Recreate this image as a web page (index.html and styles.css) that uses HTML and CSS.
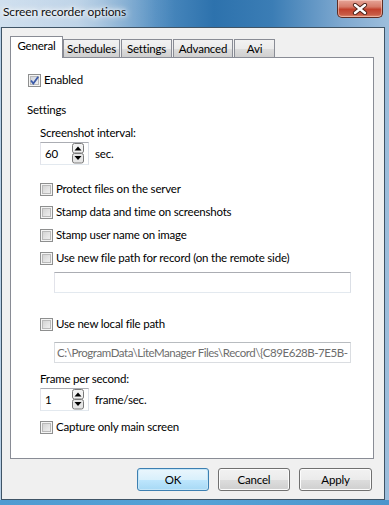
FILE: index.html
```html
<!DOCTYPE html>
<html>
<head>
<meta charset="utf-8">
<link rel="stylesheet" href="styles.css">
</head>
<body>
<div class="window">
  <div class="titlebar">
    <span class="title">Screen recorder options</span>
    <div class="close">
      <svg width="16" height="12" viewBox="0 0 16 12"><path d="M3 2 L13 10 M13 2 L3 10" stroke="#4a2118" stroke-width="4.2" stroke-linecap="round"/><path d="M3 2 L13 10 M13 2 L3 10" stroke="#ffffff" stroke-width="2.4" stroke-linecap="round"/></svg>
    </div>
  </div>
  <div class="client">
    <div class="tabs">
      <div class="tab active w-general">General</div>
      <div class="tab w-sched">Schedules</div>
      <div class="tab w-set">Settings</div>
      <div class="tab w-adv">Advanced</div>
      <div class="tab w-avi">Avi</div>
    </div>
    <div class="panel">
      <label class="row r-enabled">
        <span class="cb checked"><svg width="13" height="13" viewBox="0 0 13 13"><path d="M3 6.5 L5.3 9.5 L10.2 2.8" fill="none" stroke="#3b5aa8" stroke-width="1.8"/></svg></span>
        <span>Enabled</span>
      </label>
      <div class="row r-settings">Settings</div>
      <div class="row indent-l r-interval">Screenshot interval:</div>
      <div class="spinrow r-spin1">
        <div class="spin"><span class="val">60</span><span class="arrows"><svg width="12" height="21" viewBox="0 0 12 21"><rect x="0.5" y="0.5" width="11" height="9.5" rx="2" fill="#f2f2f2" stroke="#7a7a7a"/><rect x="0.5" y="10.5" width="11" height="9.5" rx="2" fill="#e6e6e6" stroke="#7a7a7a"/><path d="M2.5 7.5 L6 3.5 L9.5 7.5 Z" fill="#000"/><path d="M2.5 13 L6 17 L9.5 13 Z" fill="#000"/></svg></span></div>
        <span class="unit">sec.</span>
      </div>
      <label class="row indent r-protect"><span class="cb"></span><span>Protect files on the server</span></label>
      <label class="row indent r-next"><span class="cb"></span><span>Stamp data and time on screenshots</span></label>
      <label class="row indent r-next"><span class="cb"></span><span>Stamp user name on image</span></label>
      <label class="row indent r-next"><span class="cb"></span><span>Use new file path for record (on the remote side)</span></label>
      <div class="field r-field1"></div>
      <label class="row indent r-local"><span class="cb"></span><span>Use new local file path</span></label>
      <div class="field disabled r-field2">C:\ProgramData\LiteManager Files\Record\{C89E628B-7E5B-</div>
      <div class="row indent-l r-fps">Frame per second:</div>
      <div class="spinrow r-spin2">
        <div class="spin"><span class="val">1</span><span class="arrows"><svg width="12" height="21" viewBox="0 0 12 21"><rect x="0.5" y="0.5" width="11" height="9.5" rx="2" fill="#f2f2f2" stroke="#7a7a7a"/><rect x="0.5" y="10.5" width="11" height="9.5" rx="2" fill="#e6e6e6" stroke="#7a7a7a"/><path d="M2.5 7.5 L6 3.5 L9.5 7.5 Z" fill="#000"/><path d="M2.5 13 L6 17 L9.5 13 Z" fill="#000"/></svg></span></div>
        <span class="unit">frame/sec.</span>
      </div>
      <label class="row indent r-capture"><span class="cb"></span><span>Capture only main screen</span></label>
    </div>
    <div class="buttons">
      <button class="btn default">OK</button>
      <button class="btn">Cancel</button>
      <button class="btn apply">Apply</button>
    </div>
  </div>
  <div class="frame-bottom"></div>
</div>
</body>
</html>
```

FILE: styles.css
```css
* { box-sizing: border-box; }
html, body { margin: 0; padding: 0; }
body {
  width: 389px;
  height: 505px;
  overflow: hidden;
  font-family: Lato, "Noto Sans", "Liberation Sans", sans-serif;
  font-size: 11.5px;
  letter-spacing: -0.2px;
  color: #000;
  background: linear-gradient(to right, #b7cfe6 0%, #a7c4df 20%, #4f8cc0 40%, #2d72ad 55%, #3b7db5 70%, #7fa9d0 88%, #9dbedc 100%);
}
.window {
  width: 389px;
  height: 505px;
  display: flex;
  flex-direction: column;
}
.titlebar {
  height: 27px;
  display: flex;
  justify-content: space-between;
  align-items: flex-start;
  padding-left: 3px;
  padding-right: 6px;
  background: linear-gradient(to right, rgba(255,255,255,0.35) 0%, rgba(255,255,255,0.25) 25%, rgba(255,255,255,0) 45%);
}
.title {
  margin-top: 4px;
  line-height: 16px;
  font-size: 12px;
  letter-spacing: -0.1px;
  color: #111;
  text-shadow: 0 0 8px #fff, 0 0 6px #fff, 0 0 3px #fff;
}
.close {
  width: 46px;
  height: 18px;
  border: 1px solid #5d2d24;
  border-top: none;
  border-radius: 0 0 5px 5px;
  background: linear-gradient(to bottom, #e6a598 0%, #d67b69 40%, #c2412c 55%, #c85b45 85%, #e08f72 100%);
  display: flex;
  align-items: center;
  justify-content: center;
  box-shadow: inset 0 0 0 1px rgba(255,220,210,0.5);
}
.client {
  margin-left: 1px;
  width: 384px;
  height: 473px;
  border: 1px solid #3f5466;
  background: #f0f0f0;
  padding: 8px 0 0 8px;
  display: flex;
  flex-direction: column;
}
.frame-bottom {
  flex: 1;
  background: linear-gradient(to right, #4f9bd1, #55a2d6 50%, #4b95cc);
}
.tabs {
  display: flex;
  align-items: flex-end;
  height: 21px;
  position: relative;
  z-index: 2;
}
.tab {
  height: 18px;
  border: 1px solid #898c95;
  border-bottom: none;
  background: linear-gradient(to bottom, #f2f2f2 0%, #ebebeb 50%, #dddddd 51%, #cfcfcf 100%);
  line-height: 17px;
  text-align: center;
  margin-right: 1px;
  white-space: nowrap;
}
.tab.active {
  height: 22px;
  margin-bottom: -1px;
  background: #fff;
  line-height: 18px;
  margin-right: 0;
}
.w-general { width: 53px; }
.w-sched { width: 57px; }
.w-set { width: 51px; }
.w-adv { width: 60px; }
.w-avi { width: 41px; }
.panel {
  width: 364px;
  height: 402px;
  border: 1px solid #898c95;
  background: #fff;
  padding: 14px 0 0 16px;
  display: flex;
  flex-direction: column;
  position: relative;
  z-index: 1;
}
.row {
  height: 16px;
  display: flex;
  align-items: center;
  white-space: nowrap;
  line-height: 16px;
}
.indent { padding-left: 13px; }
.indent-l { padding-left: 13px; }
.cb {
  width: 13px;
  height: 13px;
  flex: none;
  border: 1px solid #8e8f8f;
  background: linear-gradient(135deg, #cbcbcb 0%, #e6e6e6 60%, #f4f4f4 100%);
  box-shadow: inset 0 0 0 1px #f4f4f4, inset 0 0 0 2px #b9b9b9;
  margin-right: 3px;
  position: relative;
}
.cb svg { position: absolute; left: -1px; top: -1px; }
.cb.checked {
  background: linear-gradient(135deg, #c9cdd6 0%, #e4e6ea 60%, #f3f4f6 100%);
}
.r-enabled { margin-top: 0; padding-left: 1px; }
.r-settings { margin-top: 14px; }
.r-interval { margin-top: 7px; }
.spinrow {
  display: flex;
  align-items: center;
  padding-left: 13px;
  height: 23px;
}
.r-spin1 { margin-top: 1px; }
.spin {
  width: 49px;
  height: 23px;
  border: 1px solid #abadb3;
  border-color: #abadb3 #dbdfe6 #e3e9ef #e2e3ea;
  background: #fff;
  display: flex;
  align-items: center;
  justify-content: space-between;
  padding: 0 4px 0 4px;
}
.val { line-height: 16px; }
.arrows { display: flex; height: 21px; }
.unit { margin-left: 6px; }
.r-protect { margin-top: 16px; }
.r-next { margin-top: 7px; }
.field {
  margin-left: 27px;
  width: 297px;
  height: 21px;
  border: 1px solid #abadb3;
  border-color: #abadb3 #dbdfe6 #e3e9ef #e2e3ea;
  background: #fff;
  white-space: nowrap;
  overflow: hidden;
  line-height: 19px;
  padding-left: 3px;
}
.r-field1 { margin-top: 6px; }
.r-local { margin-top: 23px; }
.field.disabled {
  color: #6d6d6d;
  letter-spacing: -0.45px;
  padding-left: 2px;
  border-color: #b8bcc0 #dadde1 #dadde1 #dadde1;
}
.r-field2 { margin-top: 10px; }
.r-fps { margin-top: 8px; }
.r-spin2 { margin-top: 1px; }
.r-capture { margin-top: 8px; }
.buttons {
  display: flex;
  justify-content: flex-end;
  gap: 9px;
  padding-right: 12px;
  margin-top: 9px;
}
.btn {
  width: 72px;
  height: 23px;
  border: 1px solid #707070;
  border-radius: 3px;
  background: linear-gradient(to bottom, #f2f2f2 0%, #ebebeb 50%, #dddddd 51%, #cfcfcf 100%);
  box-shadow: inset 0 0 0 1px #fcfcfc;
  font-family: inherit;
  font-size: 11.5px;
  letter-spacing: -0.2px;
  color: #000;
  padding: 0;
  line-height: 19px;
}
.btn.apply { width: 73px; }
.btn.default {
  border-color: #3c7fb1;
  background: linear-gradient(to bottom, #eaf6fd 0%, #d9f0fc 50%, #bee6fd 51%, #a7d9f5 100%);
  box-shadow: inset 0 0 0 1px #c5e6f8;
}
```
